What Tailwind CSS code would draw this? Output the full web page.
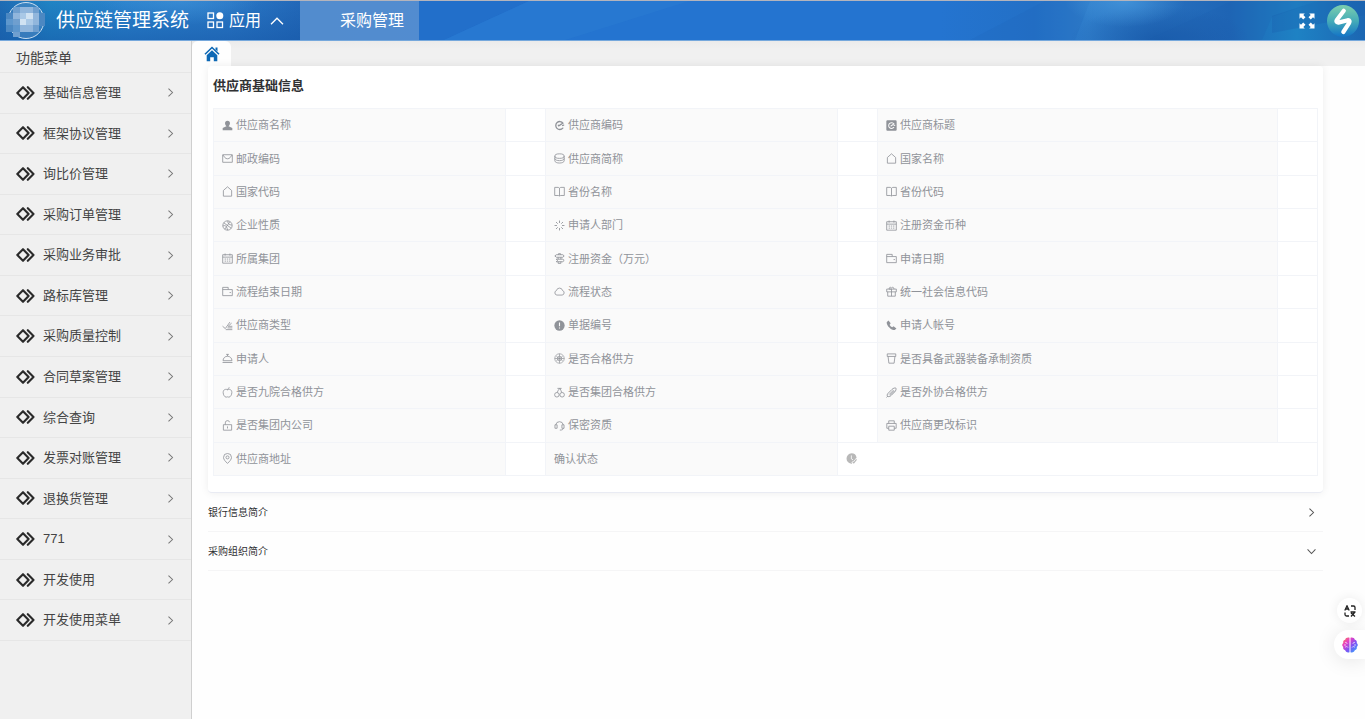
<!DOCTYPE html>
<html lang="zh-CN">
<head>
<meta charset="utf-8">
<meta name="viewport" content="width=device-width, initial-scale=1">
<title>供应链管理系统</title>
<script src="https://cdn.jsdelivr.net/npm/@tailwindcss/browser@4"></script>
</head>
<body class="flex min-h-screen flex-col bg-[#fefefe] font-['Liberation_Sans','Noto_Sans_CJK_SC',sans-serif] text-[#303133]">

<!-- Icon set -->
<svg width="0" height="0" class="absolute" aria-hidden="true">
  <defs>
    <symbol id="menu" viewBox="0 0 19 14"><path d="M7 1.200 12.600 7 7 12.800 1.300 7zM11.800 1.200 17.500 7l-5.700 5.800" fill="none" stroke="currentColor" stroke-width="2.100" stroke-linejoin="round" stroke-linecap="round"/></symbol>
    <symbol id="right" viewBox="0 0 8 8"><path d="M2.200.5 5.800 4 2.200 7.500" fill="none" stroke="currentColor" stroke-width=".9"/></symbol>
    <symbol id="user" viewBox="0 0 16 16"><path d="M8 1a3.6 3.8 0 0 1 3.6 3.8c0 1.7-.8 3-1.8 3.8v.9H6.2v-.9c-1-.8-1.8-2.100-1.800-3.800A3.600 3.800 0 0 1 8 1zM5.600 9.500h4.800L15 11.800V15H1v-3.200z" fill="currentColor"/></symbol>
    <symbol id="mail" viewBox="0 0 16 16"><path d="M1 2.500h14v11H1zM1.500 3l2.500 3.500c2 2.600 6 2.600 8 0L14.500 3" fill="none" stroke="currentColor" stroke-width="1.200"/></symbol>
    <symbol id="house" viewBox="0 0 16 16"><path d="M2 6.500 8 1.200l6 5.300v8.300H2z" fill="none" stroke="currentColor" stroke-width="1.200" stroke-linejoin="round"/></symbol>
    <symbol id="ball" viewBox="0 0 16 16"><g fill="none" stroke="currentColor" stroke-width="1.200"><circle cx="8" cy="8" r="6.800"/><path d="M2.500 4 13.500 12M4 13.500 11.500 2.300M1.200 8.600c3-1.200 5.500-.5 7 6.200M8.500 1.200c-.5 3.500 1.500 6 6.200 6.300"/></g></symbol>
    <symbol id="calendar" viewBox="0 0 16 16"><path d="M1 2.500h14v12.300H1zM1 6h14M4.500.8v3M11.500.8v3M3.800 8.800h2M7 8.800h2M10.200 8.800h2M3.800 11.800h2M7 11.800h2M10.200 11.800h2" fill="none" stroke="currentColor" stroke-width="1.200"/></symbol>
    <symbol id="wallet" viewBox="0 0 16 16"><path d="M1 14V2h8v3M1 5.200h14V14H1M11 9.500h2" fill="none" stroke="currentColor" stroke-width="1.200"/></symbol>
    <symbol id="score" viewBox="0 0 16 16"><path d="M.8 9l4 3.500L11.500 3M9 9l5-4.500M8 11.500h7M5.500 14h9.500M9 9.200h6" fill="none" stroke="currentColor" stroke-width="1.200"/></symbol>
    <symbol id="dish" viewBox="0 0 16 16"><path d="M1.500 11.200a6.500 6.500 0 0 1 13 0zM.8 13.800h14.400M6 2h4M8 2v2.600" fill="none" stroke="currentColor" stroke-width="1.200"/></symbol>
    <symbol id="apple" viewBox="0 0 16 16"><path d="M8 4c2-1.200 6.300-.9 6.300 4 0 3.500-2.300 6.800-4.300 6.800-1 0-1-.5-2-.5s-1 .5-2 .5C4 14.800 1.700 11.500 1.700 8c0-4.900 4.300-5.200 6.300-4zM8 4.500C8 3 9 1.500 11 1" fill="none" stroke="currentColor" stroke-width="1.200"/></symbol>
    <symbol id="lock" viewBox="0 0 16 16"><path d="M2 6.800h12v8H2zM4.800 6.800V4.200a3.200 3.200 0 0 1 6.300-.9M8 9.300v3" fill="none" stroke="currentColor" stroke-width="1.200"/></symbol>
    <symbol id="pin" viewBox="0 0 16 16"><g fill="none" stroke="currentColor" stroke-width="1.200"><path d="M8 15.200C5 12.200 2.200 9.500 2.200 6.500a5.800 5.800 0 0 1 11.600 0C13.800 9.500 11 12.200 8 15.200z"/><circle cx="8" cy="6.400" r="2.200"/></g></symbol>
    <symbol id="eleme" viewBox="0 0 16 16"><path d="M12.800 11.800A5.800 5.800 0 1 1 13 4.500L7 8.600l-.8-1.100M12.500 8l1.600-.6" fill="none" stroke="currentColor" stroke-width="1.900" stroke-linecap="round"/></symbol>
    <symbol id="elemefill" viewBox="0 0 16 16"><rect x=".5" y=".5" width="15" height="15" rx="1.500" fill="currentColor"/><path d="M11.300 10.800A4.200 4.200 0 1 1 11.500 5.600L7.200 8.700M11.500 8.200l1.300-.5" fill="none" stroke="#fafafa" stroke-width="1.500" stroke-linecap="round"/></symbol>
    <symbol id="coin" viewBox="0 0 16 16"><g fill="none" stroke="currentColor" stroke-width="1.200"><ellipse cx="8" cy="4.500" rx="6.800" ry="3.300"/><path d="M1.200 4.500v6.800c0 4.400 13.600 4.400 13.600 0V4.500M1.200 8c0 4.200 13.600 4.200 13.600 0"/></g></symbol>
    <symbol id="book" viewBox="0 0 16 16"><path d="M1 2h5.200L8 3.200 9.800 2H15v11.800H9.800L8 14.500l-1.800-.7H1zM8 3.200v11.300" fill="none" stroke="currentColor" stroke-width="1.200"/></symbol>
    <symbol id="loading" viewBox="0 0 16 16"><path d="M8 .8v3.500M8 11.700v3.500M.8 8h3.500M11.700 8h3.500M2.900 2.900l2.500 2.500M10.600 10.600l2.500 2.500M2.900 13.100l2.500-2.500M10.600 5.400l2.500-2.500" fill="none" stroke="currentColor" stroke-width="1.300"/></symbol>
    <symbol id="guide" viewBox="0 0 16 16"><path d="M3.500 2.500h9.300l2 1.800-2 1.900H3.500L1.200 4.300zM3.200 9h9.600l2 1.800-2 1.900H3.200l2-1.900zM6 6.200V9M10 6.200V9M6 12.700v2.300h4v-2.300M6.500 2.500V1h3v1.500" fill="none" stroke="currentColor" stroke-width="1.300"/></symbol>
    <symbol id="cloud" viewBox="0 0 16 16"><path d="M4.200 13.200a3.400 3.400 0 0 1-.6-6.600 4.500 4.500 0 0 1 8.800 0 3.400 3.400 0 0 1-.6 6.600z" fill="none" stroke="currentColor" stroke-width="1.200"/></symbol>
    <symbol id="warning" viewBox="0 0 16 16"><circle cx="8" cy="8" r="7.500" fill="currentColor"/><path d="M8 3.500v5.700M8 10.800v1.700" stroke="#fafafa" stroke-width="1.600"/></symbol>
    <symbol id="film" viewBox="0 0 16 16"><g fill="none" stroke="currentColor" stroke-width="1"><circle cx="8" cy="8" r="6.900"/><circle cx="8" cy="8" r="3.300"/><path d="M8 1v14M1 8h14M3.500 5l9 6M3.500 11l9-6"/></g></symbol>
    <symbol id="cherry" viewBox="0 0 16 16"><g fill="none" stroke="currentColor" stroke-width="1.200"><circle cx="4.200" cy="11.300" r="3.300"/><circle cx="11.800" cy="11.300" r="3.300"/><path d="M4.500 8.200C5.500 5.500 7 3.500 8.500 2c1 2 2 3.500 2.700 6.100M5 2h6"/></g></symbol>
    <symbol id="headset" viewBox="0 0 16 16"><path d="M4.500 7H1.400v5h3.100zM11.500 7h3.100v5h-3.100zM2.500 7a5.600 5.600 0 0 1 11 0M13.500 12c0 2-2 2.700-5 2.700" fill="none" stroke="currentColor" stroke-width="1.200"/></symbol>
    <symbol id="gift" viewBox="0 0 16 16"><path d="M2.500 8.500v6.300h11V8.500M1 4.500h14v4H1zM8 4.500v10.300M8 4.500H4.500C4 2 6.500 1 8 2.700 9.500 1 12 2 11.500 4.500" fill="none" stroke="currentColor" stroke-width="1.200"/></symbol>
    <symbol id="phone" viewBox="0 0 16 16"><path d="M1 3.200 3.600.9l3.200 3.900-1.500 2c.6 1.500 2 2.900 3.700 3.700l2-1.500 4.200 3.200-2.500 2.500C8 15 .8 8.800 1 3.200z" fill="currentColor"/></symbol>
    <symbol id="cup" viewBox="0 0 16 16"><path d="M3 5l1.200 9.800h7.600L13 5M1.800 1.300h12.400V5H1.800z" fill="none" stroke="currentColor" stroke-width="1.200"/></symbol>
    <symbol id="clip" viewBox="0 0 16 16"><path d="M3 9.200 8.700 3.500c2-2 5-2.500 5.700-1.800s.2 3.500-1.800 5.500l-5.300 5.300c-1.500 1.500-4.100 1.900-5 1s-.8-2.800.7-4.300zM4.500 11l6.500-6.500M6 12l6.500-6.500M.6 15.300l2-2" fill="none" stroke="currentColor" stroke-width="1.300"/></symbol>
    <symbol id="printer" viewBox="0 0 16 16"><path d="M4 12H1.200V5h13.600v7H12M4 5V1.200h8V5M4 9h8v5.800H4z" fill="none" stroke="currentColor" stroke-width="1.200"/></symbol>
  </defs>
</svg>

<!-- Top bar -->
<header class="relative flex h-[41px] shrink-0 items-center overflow-hidden border-t border-b border-t-[#b4b4bc] border-b-[#76a8dc] bg-[#2474d0] text-white">
  <svg class="absolute inset-0 h-full w-full" viewBox="0 0 1365 39" preserveAspectRatio="none" aria-hidden="true">
    <defs>
      <linearGradient id="g1"><stop offset="0" stop-color="#1f6cb4"/><stop offset=".12" stop-color="#2084c4"/><stop offset=".3" stop-color="#2a82cc"/><stop offset=".55" stop-color="#2a78c6"/><stop offset=".72" stop-color="#2268b8"/><stop offset="1" stop-color="#2268bc"/></linearGradient>
      <linearGradient id="g2"><stop offset="0" stop-color="#2474d0"/><stop offset=".22" stop-color="#2370c6"/><stop offset=".35" stop-color="#2f7dca"/><stop offset=".5" stop-color="#2870be"/><stop offset=".68" stop-color="#1f66b6"/><stop offset=".84" stop-color="#1e82c4"/><stop offset="1" stop-color="#1c66b2"/></linearGradient>
      <linearGradient id="g3" x1="0" y1="0" x2="0" y2="1"><stop offset="0" stop-color="#1454a4" stop-opacity="0"/><stop offset="1" stop-color="#1454a4" stop-opacity=".5"/></linearGradient>
      <radialGradient id="g4"><stop offset="0" stop-color="#4a9ce0" stop-opacity=".7"/><stop offset="1" stop-color="#4a9ce0" stop-opacity="0"/></radialGradient>
      <radialGradient id="g5"><stop offset="0" stop-color="#1454a4" stop-opacity=".7"/><stop offset="1" stop-color="#1454a4" stop-opacity="0"/></radialGradient>
    </defs>
    <rect width="420" height="39" fill="url(#g1)"/>
    <rect x="419" width="560" height="39" fill="#2474d0"/>
    <path d="M419 39V0h110L444 39z" fill="#206ac4" fill-opacity=".5"/>
    <path d="M444 39 529 0h160L565 39z" fill="#297bd1" fill-opacity=".7"/>
    <rect x="940" width="425" height="39" fill="url(#g2)"/>
    <path d="M970 39 1045 0h45l-15 39z" fill="#1f66bb" fill-opacity=".2"/>
    <ellipse cx="1160" cy="39" rx="90" ry="34" fill="url(#g5)"/>
    <ellipse cx="1125" cy="0" rx="60" ry="26" fill="url(#g4)"/>
    <path d="M1148 39 1232 0h85l-45 16-10 23z" fill="#1c5dad" fill-opacity=".2"/>
    <path d="M1272 15 1318 0h47v14l-93 18z" fill="#1b5cab" fill-opacity=".3"/>
    <rect width="300" height="39" fill="url(#g3)"/>
    <ellipse cx="180" cy="0" rx="80" ry="24" fill="url(#g4)" fill-opacity=".6"/>
  </svg>
  <svg class="relative ml-1.5 h-[39px] w-10" viewBox="0 0 40 39" role="img" aria-label="系统标志">
    <circle cx="20" cy="19.500" r="18" fill="#5a93c8" fill-opacity=".45" stroke="#c9def0" stroke-width="1"/>
    <path d="M0 12h7v6H0zM0 24h7v7H0zM33 12h6v13h-6z" fill="#4c88c2"/>
    <path d="M7 6h7v6H7zM27 6h6v6h-6zM7 18h7v6H7zM27 24h6v7h-6zM7 31h7v5H7z" fill="#6f9fcf"/>
    <path d="M14 6h13v6H14zM7 12h7v6H7zM27 12h6v12h-6zM14 24h13v7H14z" fill="#91b6dc"/>
    <path d="M14 12h13v12H14z" fill="#a9c8e6"/><path d="M20 12h7v6h-7zM14 18h6v6h-6z" fill="#d0e2f2"/>
    <path d="M0 18h7v6H0zM7 24h7v7H7z" fill="#5e97cd"/>
  </svg>
  <h1 class="relative ml-2.5 text-[19px] leading-6 whitespace-nowrap">供应链管理系统</h1>
  <button type="button" class="relative ml-[18px] flex h-full items-center gap-[5px] text-base whitespace-nowrap">
    <svg class="size-[17px]" viewBox="0 0 17 17" fill="none" stroke="currentColor" stroke-width="1.300" aria-hidden="true"><rect x="1" y="1" width="5.500" height="5.500"/><rect x="1" y="10" width="5.500" height="5.500"/><rect x="10" y="10" width="5.500" height="5.500"/><circle cx="12.800" cy="3.800" r="3.500" fill="currentColor" stroke="none"/></svg>
    应用
    <svg class="ml-1 h-2 w-[14px]" viewBox="0 0 14 8" fill="none" stroke="currentColor" stroke-width="1.300" aria-hidden="true"><path d="M1 7.300 7 1.200l6 6.100"/></svg>
  </button>
  <a href="#" class="relative ml-4 flex h-full w-[119px] items-center bg-[#8db8e8]/45 pl-10 text-base whitespace-nowrap">采购管理</a>
  <div class="relative ml-auto flex items-center gap-3 pr-1.5">
    <button type="button" aria-label="全屏">
      <svg class="size-4" viewBox="0 0 16 16" fill="currentColor" aria-hidden="true"><path d="M.5.500h5.300L4.300 2l2.200 2.200-2.300 2.300L2 4.300.5 5.800zM15.500.500v5.300L14 4.300l-2.200 2.200-2.300-2.300L11.700 2 10.200.5zM.5 15.500v-5.300L2 11.700l2.200-2.200 2.300 2.300L4.300 14l1.500 1.500zM15.500 15.500h-5.300l1.500-1.500-2.200-2.200 2.300-2.300 2.200 2.200 1.500-1.500z"/></svg>
    </button>
    <button type="button" aria-label="用户">
      <svg class="size-8" viewBox="0 0 32 32" aria-hidden="true"><defs><linearGradient id="av" x1="0" y1="0" x2="0" y2="1"><stop offset="0" stop-color="#7ccfae"/><stop offset=".5" stop-color="#45acb8"/><stop offset="1" stop-color="#1373c6"/></linearGradient></defs><circle cx="16" cy="16" r="16" fill="url(#av)"/><path d="M16.800 5.800 9.800 15c-1 1.700.3 3 2.400 2.400l8.600-2.200c1.800-.2 2.200 1.300 1.400 2.600L16.300 27" fill="none" stroke="#fff" stroke-width="4.200" stroke-linejoin="round" stroke-linecap="round"/></svg>
    </button>
  </div>
</header>

<div class="flex flex-1">
  <!-- Sidebar -->
  <aside class="w-48 shrink-0 border-r border-[#cfcfcf] bg-[#f0f0f0]">
    <h2 class="flex h-8 items-center border-b border-[#e6e6e6] pt-1 pl-4 text-[14px] text-[#444]">功能菜单</h2>
    <nav class="grid min-h-[568px] auto-rows-fr text-[13px] text-[#444] [&>a]:flex [&>a]:items-center [&>a]:border-b [&>a]:border-[#e6e6e6] [&>a]:pr-4 [&>a]:pl-4 [&_span]:ml-2 [&_span]:flex-1 [&_svg:first-child]:h-[14px] [&_svg:first-child]:w-[19px] [&_svg:first-child]:text-[#2a2a2a] [&_svg:last-child]:size-[9px] [&_svg:last-child]:text-[#777]">
      <a href="#"><svg><use href="#menu"/></svg><span>基础信息管理</span><svg><use href="#right"/></svg></a>
      <a href="#"><svg><use href="#menu"/></svg><span>框架协议管理</span><svg><use href="#right"/></svg></a>
      <a href="#"><svg><use href="#menu"/></svg><span>询比价管理</span><svg><use href="#right"/></svg></a>
      <a href="#"><svg><use href="#menu"/></svg><span>采购订单管理</span><svg><use href="#right"/></svg></a>
      <a href="#"><svg><use href="#menu"/></svg><span>采购业务审批</span><svg><use href="#right"/></svg></a>
      <a href="#"><svg><use href="#menu"/></svg><span>路标库管理</span><svg><use href="#right"/></svg></a>
      <a href="#"><svg><use href="#menu"/></svg><span>采购质量控制</span><svg><use href="#right"/></svg></a>
      <a href="#"><svg><use href="#menu"/></svg><span>合同草案管理</span><svg><use href="#right"/></svg></a>
      <a href="#"><svg><use href="#menu"/></svg><span>综合查询</span><svg><use href="#right"/></svg></a>
      <a href="#"><svg><use href="#menu"/></svg><span>发票对账管理</span><svg><use href="#right"/></svg></a>
      <a href="#"><svg><use href="#menu"/></svg><span>退换货管理</span><svg><use href="#right"/></svg></a>
      <a href="#"><svg><use href="#menu"/></svg><span>771</span><svg><use href="#right"/></svg></a>
      <a href="#"><svg><use href="#menu"/></svg><span>开发使用</span><svg><use href="#right"/></svg></a>
      <a href="#"><svg><use href="#menu"/></svg><span>开发使用菜单</span><svg><use href="#right"/></svg></a>
    </nav>
  </aside>

  <main class="min-w-0 flex-1">
    <!-- Page tabs -->
    <div class="h-[25px] bg-gradient-to-b from-[#ebebeb] to-[#f0f0f0] to-30%">
      <a href="#" aria-label="首页" class="flex h-full w-[39px] items-center justify-center rounded-t-md bg-[#fefefe]">
        <svg class="size-4" viewBox="0 0 16 16" aria-hidden="true"><path d="M1 8.300 8 1.500l7 6.800" fill="none" stroke="#0d68b5" stroke-width="1.600"/><path d="M8 4.200 13.300 9.300v6H9.800v-4H6.200v4H2.700v-6z" fill="#0d68b5"/><path d="M11.500 1.500h2v4l-2-2z" fill="#0d68b5"/></svg>
      </a>
    </div>

    <div class="pr-[42px] pl-4">
      <section class="rounded-sm border-b border-[#e9ebf3] bg-white px-[5px] pt-2 pb-4 shadow-[0_0_8px_rgba(0,0,0,0.07)]">
        <h3 class="text-[13px] leading-6 font-bold">供应商基础信息</h3>
        <table class="mt-2.5 h-[368px] w-full table-fixed border-collapse bg-white text-left text-[11px] leading-4 text-[#909399] [&_span]:flex [&_span]:items-center [&_span]:gap-[3px] [&_svg]:size-[11px] [&_svg]:shrink-0 [&_td]:border [&_td]:border-[#f2f4f8] [&_td]:p-0 [&_td]:px-2 [&_th]:border [&_th]:border-[#f2f4f8] [&_th]:bg-[#fafafa] [&_th]:p-0 [&_th]:px-2 [&_th]:font-normal">
          <colgroup><col class="w-[292px]"><col class="w-10"><col class="w-[292px]"><col class="w-10"><col><col class="w-10"></colgroup>
          <tbody>
          <tr><th scope="row"><span><svg><use href="#user"/></svg>供应商名称</span></th><td></td><th scope="row"><span><svg><use href="#eleme"/></svg>供应商编码</span></th><td></td><th scope="row"><span><svg><use href="#elemefill"/></svg>供应商标题</span></th><td></td></tr>
          <tr><th scope="row"><span><svg><use href="#mail"/></svg>邮政编码</span></th><td></td><th scope="row"><span><svg><use href="#coin"/></svg>供应商简称</span></th><td></td><th scope="row"><span><svg><use href="#house"/></svg>国家名称</span></th><td></td></tr>
          <tr><th scope="row"><span><svg><use href="#house"/></svg>国家代码</span></th><td></td><th scope="row"><span><svg><use href="#book"/></svg>省份名称</span></th><td></td><th scope="row"><span><svg><use href="#book"/></svg>省份代码</span></th><td></td></tr>
          <tr><th scope="row"><span><svg><use href="#ball"/></svg>企业性质</span></th><td></td><th scope="row"><span><svg><use href="#loading"/></svg>申请人部门</span></th><td></td><th scope="row"><span><svg><use href="#calendar"/></svg>注册资金币种</span></th><td></td></tr>
          <tr><th scope="row"><span><svg><use href="#calendar"/></svg>所属集团</span></th><td></td><th scope="row"><span><svg><use href="#guide"/></svg>注册资金（万元）</span></th><td></td><th scope="row"><span><svg><use href="#wallet"/></svg>申请日期</span></th><td></td></tr>
          <tr><th scope="row"><span><svg><use href="#wallet"/></svg>流程结束日期</span></th><td></td><th scope="row"><span><svg><use href="#cloud"/></svg>流程状态</span></th><td></td><th scope="row"><span><svg><use href="#gift"/></svg>统一社会信息代码</span></th><td></td></tr>
          <tr><th scope="row"><span><svg><use href="#score"/></svg>供应商类型</span></th><td></td><th scope="row"><span><svg><use href="#warning"/></svg>单据编号</span></th><td></td><th scope="row"><span><svg><use href="#phone"/></svg>申请人帐号</span></th><td></td></tr>
          <tr><th scope="row"><span><svg><use href="#dish"/></svg>申请人</span></th><td></td><th scope="row"><span><svg><use href="#film"/></svg>是否合格供方</span></th><td></td><th scope="row"><span><svg><use href="#cup"/></svg>是否具备武器装备承制资质</span></th><td></td></tr>
          <tr><th scope="row"><span><svg><use href="#apple"/></svg>是否九院合格供方</span></th><td></td><th scope="row"><span><svg><use href="#cherry"/></svg>是否集团合格供方</span></th><td></td><th scope="row"><span><svg><use href="#clip"/></svg>是否外协合格供方</span></th><td></td></tr>
          <tr><th scope="row"><span><svg><use href="#lock"/></svg>是否集团内公司</span></th><td></td><th scope="row"><span><svg><use href="#headset"/></svg>保密资质</span></th><td></td><th scope="row"><span><svg><use href="#printer"/></svg>供应商更改标识</span></th><td></td></tr>
          <tr><th scope="row"><span><svg><use href="#pin"/></svg>供应商地址</span></th><td></td><th scope="row"><span>确认状态</span></th><td colspan="3"><span class="text-[#b8b8b8]"><svg viewBox="0 0 16 16" role="img" aria-label="待确认"><path d="M8 .5a7.500 7.500 0 0 1 7.400 6.300L8.500 15.500A7.500 7.500 0 1 1 8 .5z" fill="currentColor"/><path d="M7.800 3.500v5l2.500 1.500" fill="none" stroke="#fff" stroke-width="1.200"/><path d="M9 12.500l2.300 2L15.600 9" fill="none" stroke="#fff" stroke-width="3.500"/><path d="M9.500 12.500l1.800 1.700L15.300 9.200" fill="none" stroke="currentColor" stroke-width="1.800"/></svg></span></td></tr>
          </tbody>
        </table>
      </section>

      <!-- Collapsed sections -->
      <button type="button" class="flex h-[39px] w-full items-center justify-between border-b border-[#f5f5f6] pr-[7px] text-[10px] text-[#303133]">银行信息简介<svg class="size-[9px] text-[#555]" aria-hidden="true"><use href="#right"/></svg></button>
      <button type="button" class="flex h-[39px] w-full items-center justify-between border-b border-[#f5f5f6] pr-[7px] text-[10px] text-[#303133]">采购组织简介<svg class="size-[9px] rotate-90 text-[#555]" aria-hidden="true"><use href="#right"/></svg></button>
    </div>
  </main>
</div>

<!-- Floating helpers -->
<div class="fixed right-0 bottom-[60px] flex flex-col items-end gap-[7px]">
  <button type="button" aria-label="翻译" class="mr-[3px] flex size-[25px] items-center justify-center rounded-full bg-white shadow-[0_0_12px_rgba(0,0,0,0.08)]">
    <svg class="size-3" viewBox="0 0 12 12" fill="none" stroke="#222" stroke-width="1.300" aria-hidden="true"><path d="M.8 5.500 3 .8l2.200 4.700M1.600 4h2.800M7 1h2.500a1.500 1.500 0 0 1 1.500 1.500V5M1 7.500v2A1.500 1.500 0 0 0 2.500 11H5M6.500 7h5M7 11.500l4-4.500M7 8l4 3.500"/></svg>
  </button>
  <button type="button" aria-label="智能助手" class="flex h-[29px] w-[31px] items-center justify-center rounded-l-full bg-white shadow-[0_2px_20px_rgba(0,0,0,0.1)]">
    <svg class="size-4" viewBox="0 0 16 16" aria-hidden="true"><defs><linearGradient id="br" x1="0" y1="0" x2="1" y2="1"><stop offset="0" stop-color="#ff8a3c"/><stop offset=".3" stop-color="#e83fc4"/><stop offset=".6" stop-color="#7a55f5"/><stop offset="1" stop-color="#29b6ff"/></linearGradient></defs><path d="M7.500.800v14.400c-2 .8-4-.3-4.300-1.900C1.300 12.800.8 11 1.300 10-.2 9-.2 7 1.300 6 .800 4.200 1.800 2.900 3.200 2.700 3.500 1 5.500.2 7.500.8zM8.500.800v14.400c2 .8 4-.3 4.300-1.900 1.900-.5 2.400-2.300 1.900-3.300 1.500-1 1.500-3 0-4 .5-1.800-.5-3.100-1.900-3.300C12.500 1 10.500.2 8.500.8z" fill="url(#br)"/><path d="M3 5.500c1.500-.5 2 .5 2 1.500M3 10.500c1-1.500 2.500-1 3 0M13 5.500c-1.500-.5-2 .5-2 1.500M13 10.500c-1-1.500-2.500-1-3 0M2 8h2M12 8h2" fill="none" stroke="#fff" stroke-opacity=".8" stroke-width=".8"/></svg>
  </button>
</div>
</body>
</html>
